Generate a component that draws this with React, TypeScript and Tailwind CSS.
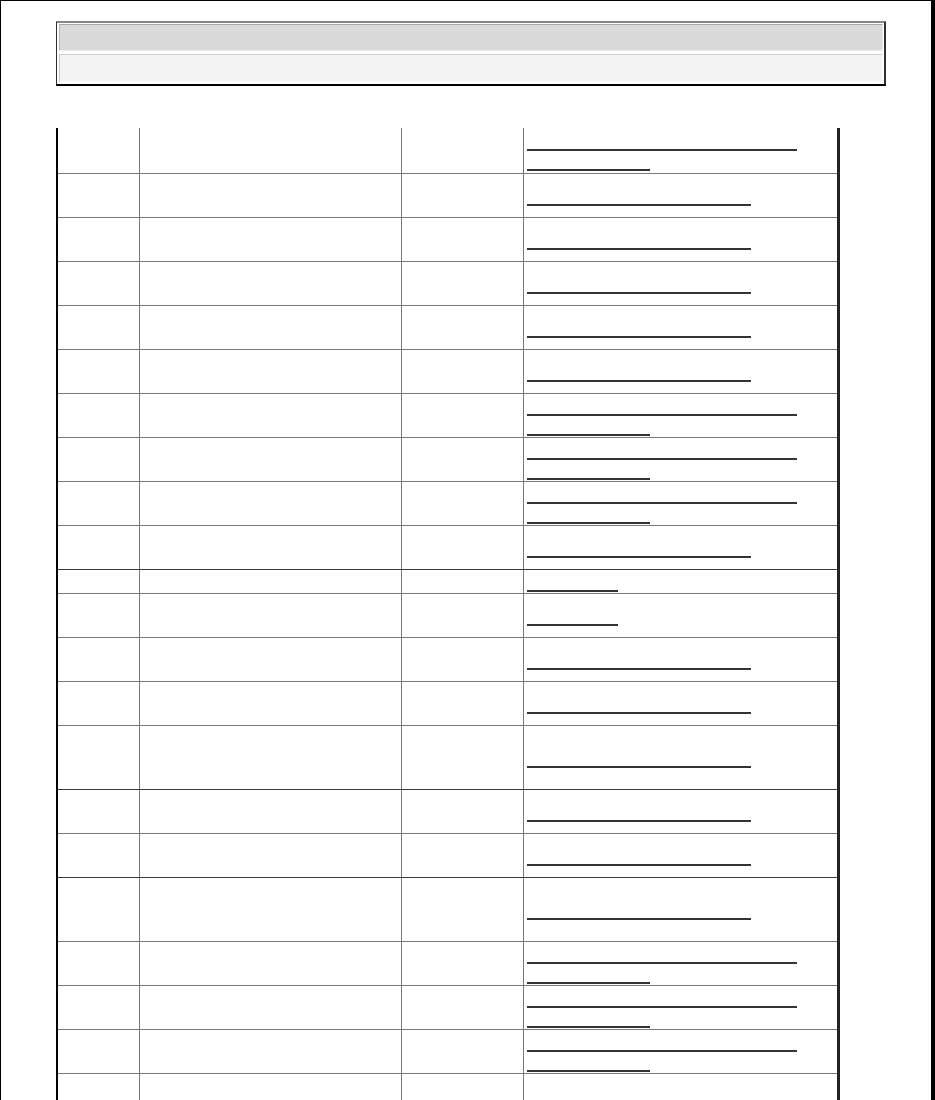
type Line = "long" | "short" | "medium" | "tiny";

interface RowSpec {
  h: string;
  lines: Line[];
  dark?: boolean;
}

const widths: Record<Line, string> = {
  long: "w-[270px]",
  short: "w-[123px]",
  medium: "w-[224px]",
  tiny: "w-[91px]",
};

const rows: RowSpec[] = [
  { h: "h-[46px]", lines: ["long", "short"] },
  { h: "h-[44px]", lines: ["medium"] },
  { h: "h-[44px]", lines: ["medium"] },
  { h: "h-[44px]", lines: ["medium"] },
  { h: "h-[44px]", lines: ["medium"] },
  { h: "h-[44px]", lines: ["medium"] },
  { h: "h-[44px]", lines: ["long", "short"] },
  { h: "h-[44px]", lines: ["long", "short"] },
  { h: "h-[44px]", lines: ["long", "short"] },
  { h: "h-[44px]", lines: ["medium"], dark: true },
  { h: "h-[24px]", lines: ["tiny"] },
  { h: "h-[44px]", lines: ["tiny"] },
  { h: "h-[44px]", lines: ["medium"] },
  { h: "h-[44px]", lines: ["medium"] },
  { h: "h-[64px]", lines: ["medium"], dark: true },
  { h: "h-[44px]", lines: ["medium"] },
  { h: "h-[44px]", lines: ["medium"], dark: true },
  { h: "h-[64px]", lines: ["medium"] },
  { h: "h-[44px]", lines: ["long", "short"] },
  { h: "h-[44px]", lines: ["long", "short"] },
  { h: "h-[44px]", lines: ["long", "short"] },
  { h: "h-[60px]", lines: [] },
];

const Cell = ({ className = "" }: { className?: string }) => (
  <div className={`border-r border-[#7a7a7a] ${className}`} />
);

const TableRow = ({ row }: { row: RowSpec }) => (
  <div
    className={`grid grid-cols-[82px_262px_122px_313px] ${row.h} border-b ${
      row.dark ? "border-[#3a3a3a]" : "border-[#7a7a7a]"
    }`}
  >
    <Cell />
    <Cell />
    <Cell />
    <div className="flex flex-col justify-center pl-[3px]">
      {row.lines.map((l, i) => (
        <div key={i} className="h-[20px]">
          <span className={`block h-[20px] ${widths[l]} border-b-2 border-[#333]`} />
        </div>
      ))}
    </div>
  </div>
);

export default function App() {
  return (
    <div
      className="w-[935px] h-[1100px] overflow-hidden bg-white border-l border-t border-r-4 border-black"
      style={{ fontFamily: '"Liberation Serif", serif' }}
    >
      <div className="ml-[55px] mt-[20px] w-[830px] border-t-2 border-t-[#858585] border-l border-l-[#303030] border-r-2 border-r-[#303030] border-b-2 border-b-black pt-px pb-[2px] pl-[2px] pr-px flex flex-col gap-[3px]">
        <div className="h-[27px] bg-[#dadada] border-t border-l border-t-[#a9a9a9] border-l-[#b5b5b5] border-b border-r border-b-[#ececec] border-r-[#ececec]" />
        <div className="h-[28px] bg-[#f3f3f3] border-t border-l border-t-[#cfcfcf] border-l-[#c8c8c8] border-b border-r border-b-[#fafafa] border-r-[#fafafa]" />
      </div>

      <div className="ml-[55px] mt-[42px] w-[784px] border-l-2 border-black border-r-[3px] border-r-[#222]">
        {rows.map((r, i) => (
          <TableRow key={i} row={r} />
        ))}
      </div>
    </div>
  );
}
